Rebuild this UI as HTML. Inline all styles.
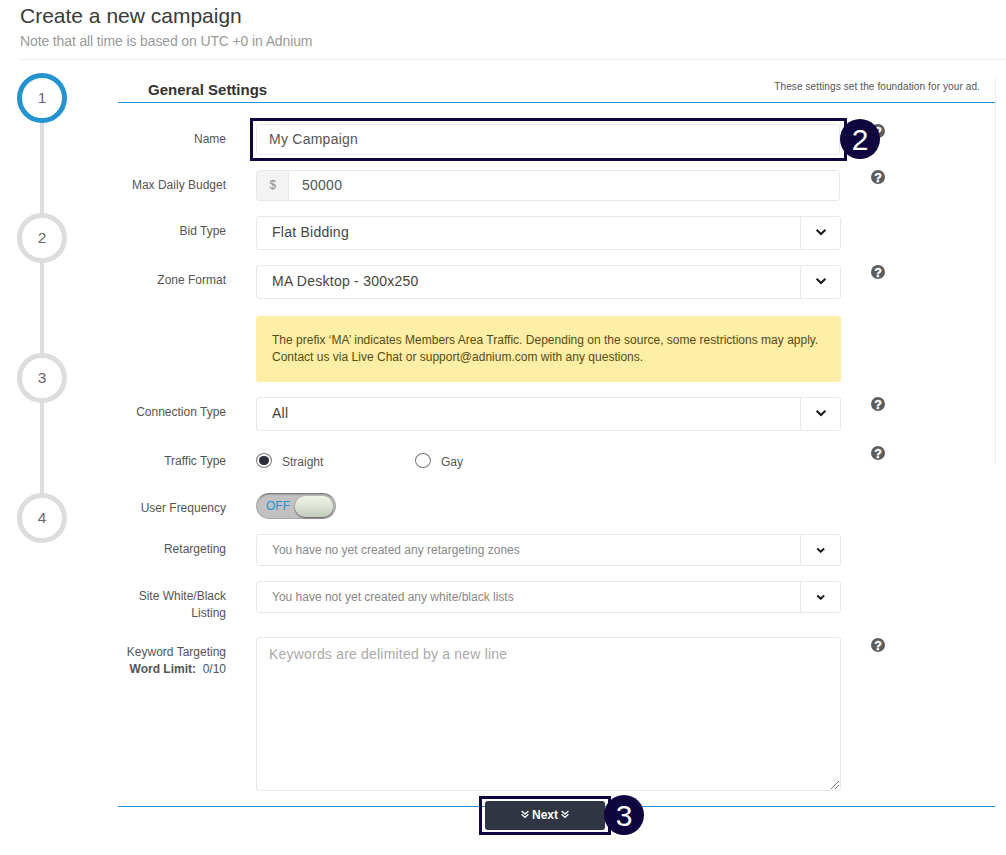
<!DOCTYPE html>
<html><head><meta charset="utf-8"><title>Create a new campaign</title>
<style>
*{box-sizing:border-box;margin:0;padding:0}
html,body{width:1006px;height:855px;background:#fff;overflow:hidden}
body{font-family:"Liberation Sans",Arial,sans-serif;color:#555;position:relative;font-size:12px}
.abs{position:absolute}
h1{position:absolute;left:20px;top:4px;font-size:21px;font-weight:normal;color:#3a3a3a;line-height:24px;white-space:nowrap}
.sub{position:absolute;left:20px;top:32px;font-size:14px;letter-spacing:-0.13px;color:#9a9a9a;line-height:18px;white-space:nowrap}
.hr{position:absolute;left:20px;top:59px;width:986px;height:1px;background:#eee}
.vline{position:absolute;left:40px;top:120px;width:4px;height:380px;background:#ddd}
.step{position:absolute;left:17px;width:50px;height:50px;border-radius:50%;border:5px solid #ddd;background:#fff;text-align:center;line-height:39px;font-size:15.4px;color:#666}
.step.on{border-color:#2693d1}
.panelr{position:absolute;left:995px;top:78px;width:1px;height:386px;background:#eee}
.ptitle{position:absolute;left:148px;top:81px;font-size:15px;font-weight:bold;color:#333;line-height:18px;white-space:nowrap}
.pdesc{position:absolute;right:26px;top:80px;font-size:10px;letter-spacing:.11px;color:#555;line-height:14px;white-space:nowrap}
.bline{position:absolute;left:118px;width:877px;height:1px;background:#2693d1}
.lbl{position:absolute;left:100px;width:126px;text-align:right;font-size:12px;line-height:17px;color:#555}
.inp{position:absolute;left:256px;width:584px;border:1px solid #e8e8e8;border-radius:3px;background:#fff;color:#444;font-size:14px;letter-spacing:.25px;white-space:nowrap}
.sel{letter-spacing:.25px;width:585px}
.sel .arr{position:absolute;right:0;top:0;bottom:0;width:40px;border-left:1px solid #e8e8e8}
.sel svg{position:absolute;left:14px;top:50%;margin-top:-5px}
.sm svg{width:9.4px;height:6.3px;left:15.3px;margin-top:-3px}
.sm path{stroke-width:2.6}
.help{position:absolute;left:871px;width:14px;height:14px}
.hl{position:absolute;border:3px solid #0f0640}
.num{position:absolute;width:40px;height:40px;border-radius:50%;background:#0f0640;color:#fff;font-size:30px;line-height:41px;text-align:center}
</style></head><body>
<h1>Create a new campaign</h1>
<div class="sub">Note that all time is based on UTC +0 in Adnium</div>
<div class="hr"></div>

<div class="vline"></div>
<div class="step on" style="top:73px">1</div>
<div class="step" style="top:213px">2</div>
<div class="step" style="top:353px">3</div>
<div class="step" style="top:493px">4</div>

<div class="panelr"></div>
<div class="ptitle">General Settings</div>
<div class="pdesc">These settings set the foundation for your ad.</div>
<div class="bline" style="top:102px"></div>

<!-- Name -->
<div class="lbl" style="top:131px">Name</div>
<svg class="help" style="top:124px" viewBox="0 0 14 14"><circle cx="7" cy="7" r="7" fill="#5c5c5c"/><text x="7.1" y="11.7" font-size="12.5" font-weight="bold" fill="#fff" stroke="#fff" stroke-width=".35" text-anchor="middle" font-family="Liberation Sans,sans-serif">?</text></svg>
<div class="hl" style="left:250px;top:118px;width:597px;height:43px"></div>
<div class="inp" style="top:124px;height:31px;line-height:29px;padding-left:12px;color:#555">My Campaign</div>
<div class="num" style="left:840px;top:119px">2</div>

<!-- Max daily budget -->
<div class="lbl" style="top:177px">Max Daily Budget</div>
<div class="inp" style="top:170px;height:31px;line-height:29px;padding-left:45px;color:#555">50000
  <div class="abs" style="left:0;top:0;bottom:0;width:32px;background:#f3f3f3;border-right:1px solid #e8e8e8;border-radius:2px 0 0 2px;text-align:center;font-size:12px;color:#8a8a8a;padding-left:1px">$</div>
</div>
<svg class="help" style="top:170px" viewBox="0 0 14 14"><circle cx="7" cy="7" r="7" fill="#5c5c5c"/><text x="7.1" y="11.7" font-size="12.5" font-weight="bold" fill="#fff" stroke="#fff" stroke-width=".35" text-anchor="middle" font-family="Liberation Sans,sans-serif">?</text></svg>

<!-- Bid type -->
<div class="lbl" style="top:223px">Bid Type</div>
<div class="inp sel" style="top:216px;height:34px;line-height:30px;padding-left:15px">Flat Bidding<div class="arr"><svg width="12" height="8" viewBox="0 0 12 8"><path d="M1.6 1.8 L6 6 L10.4 1.8" fill="none" stroke="#1c1c1c" stroke-width="2.1"/></svg></div></div>

<!-- Zone format -->
<div class="lbl" style="top:272px">Zone Format</div>
<div class="inp sel" style="top:265px;height:34px;line-height:30px;padding-left:15px">MA Desktop - 300x250<div class="arr"><svg width="12" height="8" viewBox="0 0 12 8"><path d="M1.6 1.8 L6 6 L10.4 1.8" fill="none" stroke="#1c1c1c" stroke-width="2.1"/></svg></div></div>
<svg class="help" style="top:265px" viewBox="0 0 14 14"><circle cx="7" cy="7" r="7" fill="#5c5c5c"/><text x="7.1" y="11.7" font-size="12.5" font-weight="bold" fill="#fff" stroke="#fff" stroke-width=".35" text-anchor="middle" font-family="Liberation Sans,sans-serif">?</text></svg>

<!-- Alert -->
<div class="abs" style="left:256px;top:316px;width:585px;height:66px;background:#ffeea5;border-radius:3px;padding:16px 16px;font-size:12px;letter-spacing:.012px;line-height:17px;color:#574c12;white-space:nowrap">The prefix ‘MA’ indicates Members Area Traffic. Depending on the source, some restrictions may apply.<br>Contact us via Live Chat or support@adnium.com with any questions.</div>

<!-- Connection type -->
<div class="lbl" style="top:404px">Connection Type</div>
<div class="inp sel" style="top:397px;height:34px;line-height:30px;padding-left:15px">All<div class="arr"><svg width="12" height="8" viewBox="0 0 12 8"><path d="M1.6 1.8 L6 6 L10.4 1.8" fill="none" stroke="#1c1c1c" stroke-width="2.1"/></svg></div></div>
<svg class="help" style="top:397px" viewBox="0 0 14 14"><circle cx="7" cy="7" r="7" fill="#5c5c5c"/><text x="7.1" y="11.7" font-size="12.5" font-weight="bold" fill="#fff" stroke="#fff" stroke-width=".35" text-anchor="middle" font-family="Liberation Sans,sans-serif">?</text></svg>

<!-- Traffic type -->
<div class="lbl" style="top:453px">Traffic Type</div>
<div class="abs" style="left:256px;top:453px;width:16px;height:15px;border-radius:50%;border:1px solid #767676;background:#fff"><div style="position:absolute;left:2px;top:2px;width:10px;height:9px;border-radius:46%;background:#2b2f3a"></div></div>
<div class="abs" style="left:282px;top:454px;font-size:12px;line-height:17px;color:#555">Straight</div>
<div class="abs" style="left:415px;top:453px;width:16px;height:15px;border-radius:50%;border:1px solid #767676;background:#fff"></div>
<div class="abs" style="left:441px;top:454px;font-size:12px;line-height:17px;color:#555">Gay</div>
<svg class="help" style="top:446px" viewBox="0 0 14 14"><circle cx="7" cy="7" r="7" fill="#5c5c5c"/><text x="7.1" y="11.7" font-size="12.5" font-weight="bold" fill="#fff" stroke="#fff" stroke-width=".35" text-anchor="middle" font-family="Liberation Sans,sans-serif">?</text></svg>

<!-- User frequency -->
<div class="lbl" style="top:500px">User Frequency</div>
<div class="abs" style="left:256px;top:493px;width:80px;height:26px;border-radius:13px;background:#c1c1c1;border:1px solid #a9a9a9;border-top-color:#7f7f7f;box-shadow:inset 0 1px 1px rgba(0,0,0,.18)">
  <span style="position:absolute;left:9px;top:0;line-height:24px;font-size:12px;color:#2693d1">OFF</span>
  <div style="position:absolute;left:38px;top:2px;width:38px;height:21px;border-radius:10.5px;background:linear-gradient(#f0f3ea,#dfe5d6 45%,#c3cbb9);box-shadow:0 1px 2px rgba(0,0,0,.55)"></div>
</div>

<!-- Retargeting -->
<div class="lbl" style="top:541px">Retargeting</div>
<div class="inp sel sm" style="top:534px;height:32px;line-height:30px;padding-left:15px;font-size:12px;letter-spacing:0;color:#888">You have no yet created any retargeting zones<div class="arr"><svg width="12" height="8" viewBox="0 0 12 8"><path d="M1.6 1.8 L6 6 L10.4 1.8" fill="none" stroke="#1c1c1c" stroke-width="2.1"/></svg></div></div>

<!-- Site white/black -->
<div class="lbl" style="top:588px">Site White/Black<br>Listing</div>
<div class="inp sel sm" style="top:581px;height:32px;line-height:30px;padding-left:15px;font-size:12px;letter-spacing:0;color:#888">You have not yet created any white/black lists<div class="arr"><svg width="12" height="8" viewBox="0 0 12 8"><path d="M1.6 1.8 L6 6 L10.4 1.8" fill="none" stroke="#1c1c1c" stroke-width="2.1"/></svg></div></div>

<!-- Keyword -->
<div class="lbl" style="top:644px">Keyword Targeting<br><b>Word Limit:</b>&nbsp; 0/10</div>
<div class="inp" style="top:637px;width:585px;height:154px;line-height:20px;padding:6px 12px;letter-spacing:.2px;color:#aaa">Keywords are delimited by a new line
<svg class="abs" style="right:0;bottom:0" width="10" height="10" viewBox="0 0 10 10"><path d="M9 1 L1 9 M9 5 L5 9" stroke="#777" stroke-width="1" fill="none"/></svg>
</div>
<svg class="help" style="top:638px" viewBox="0 0 14 14"><circle cx="7" cy="7" r="7" fill="#5c5c5c"/><text x="7.1" y="11.7" font-size="12.5" font-weight="bold" fill="#fff" stroke="#fff" stroke-width=".35" text-anchor="middle" font-family="Liberation Sans,sans-serif">?</text></svg>

<div class="bline" style="top:806px"></div>
<div class="hl" style="left:479px;top:796px;width:132px;height:39px"></div>
<div class="abs" style="left:485px;top:801px;width:120px;height:29px;border-radius:3px;background:#2f3542;color:#fff;font-weight:bold;font-size:12px;line-height:28px;text-align:center">Next
<svg class="abs" style="left:36px;top:9px" width="8" height="8" viewBox="0 0 8 8"><path d="M0.6 0.9 L4 4 L7.4 0.9 M0.6 4.3 L4 7.4 L7.4 4.3" fill="none" stroke="#fff" stroke-width="1.3"/></svg>
<svg class="abs" style="left:76.3px;top:9px" width="8" height="8" viewBox="0 0 8 8"><path d="M0.6 0.9 L4 4 L7.4 0.9 M0.6 4.3 L4 7.4 L7.4 4.3" fill="none" stroke="#fff" stroke-width="1.3"/></svg>
</div>
<div class="num" style="left:604px;top:795px">3</div>
</body></html>
